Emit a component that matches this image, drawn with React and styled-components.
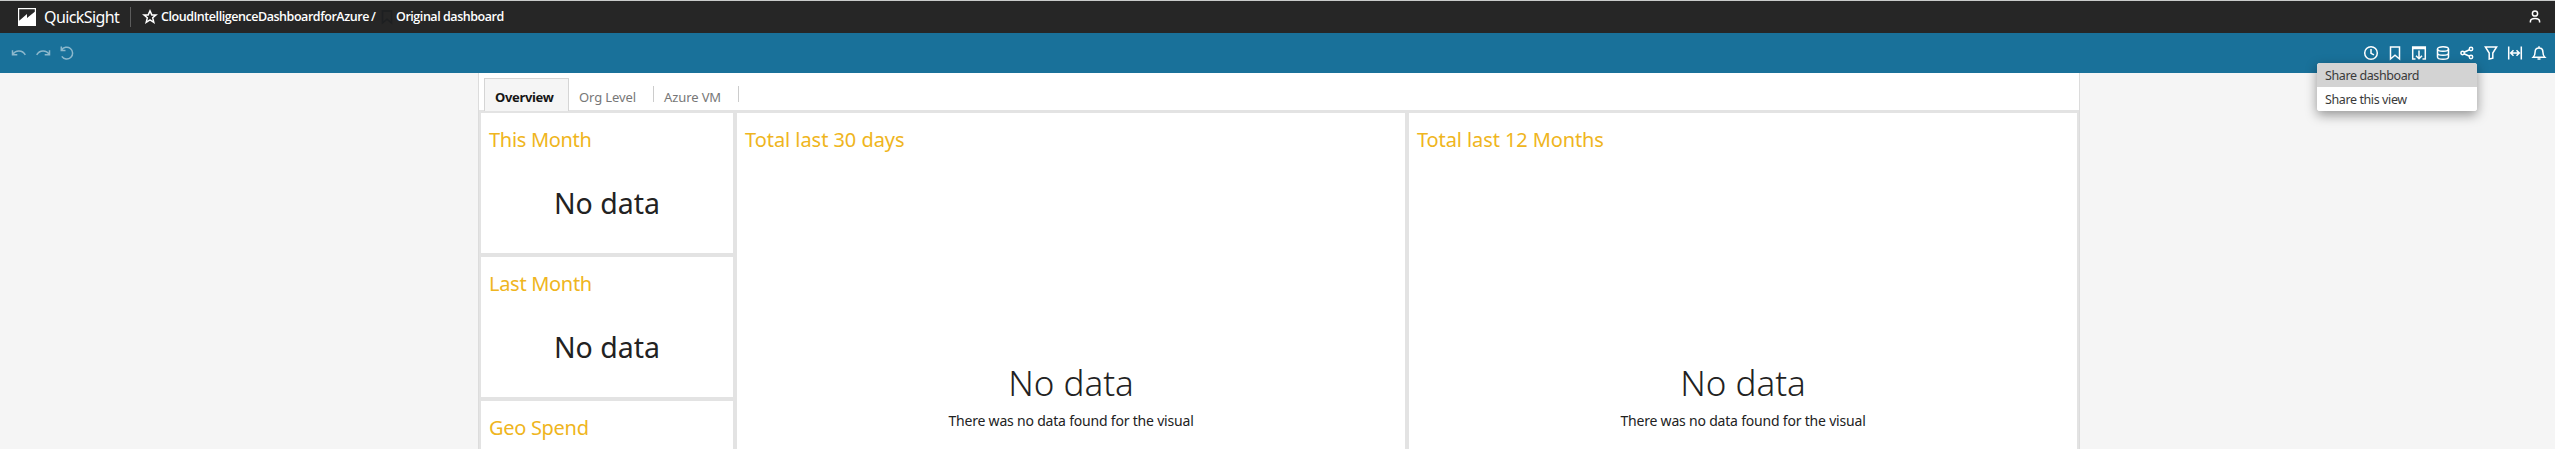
import React from "react";
import styled, { createGlobalStyle } from "styled-components";

const GlobalStyle = createGlobalStyle`
  * { box-sizing: border-box; }
  body { margin: 0; font-family: "Noto Sans", "Open Sans", sans-serif; background: #f5f5f5; }
`;

const Page = styled.div`
  display: flex;
  flex-direction: column;
  height: 449px;
  overflow: hidden;
  color: #222;
`;

const Header = styled.header`
  display: flex;
  align-items: center;
  flex: none;
  height: 33px;
  padding: 0 12px 0 18px;
  background: #262626;
  border-top: 1px solid #c9cbca;
  color: #fff;
`;

const Brand = styled.span`
  width: 76px;
  margin-left: 8px;
  font-size: 16px;
  line-height: 20px;
  letter-spacing: -0.6px;
  white-space: nowrap;
`;

const Divider = styled.span`
  width: 1px;
  height: 20px;
  margin: 0 11px 0 10px;
  background: #5c5c5c;
`;

const Crumb = styled.span`
  width: ${(p) => p.$width}px;
  margin-left: ${(p) => p.$gap}px;
  font-family: "Open Sans", sans-serif;
  font-size: 12.5px;
  font-weight: 600;
  line-height: 18px;
  letter-spacing: -0.45px;
  white-space: nowrap;
`;

const Toolbar = styled.nav`
  display: flex;
  align-items: center;
  justify-content: space-between;
  position: relative;
  flex: none;
  height: 40px;
  padding: 0 8px 0 11px;
  background: #19719a;
  color: #fff;
`;

const IconGroup = styled.div`
  display: flex;
  gap: 8px;
  opacity: ${(p) => (p.$muted ? 0.5 : 1)};
`;

const Icon = styled.svg`
  display: block;
  flex: none;
  width: 16px;
  height: 16px;
  fill: none;
  stroke: currentColor;
  stroke-width: 1.5;
  overflow: visible;
`;

const Logo = styled(Icon)`
  width: 18px;
  height: 18px;
`;

const CrumbIcon = styled(Icon)`
  margin-left: 2px;
  color: #1d1f21;
`;

const UserIcon = styled(Icon)`
  margin-left: auto;
`;

const Menu = styled.div`
  position: absolute;
  z-index: 2;
  top: 30px;
  right: 78px;
  width: 160px;
  overflow: hidden;
  background: #fff;
  border-radius: 3px;
  box-shadow: 0 4px 12px rgba(0, 0, 0, 0.4);
`;

const MenuItem = styled.div`
  height: 24px;
  padding-left: 8px;
  background: ${(p) => (p.$active ? "#d3d3d3" : "#fff")};
  color: #3a3a3a;
  font-size: 12.5px;
  line-height: 26px;
  letter-spacing: -0.4px;
`;

const Sheet = styled.main`
  display: flex;
  flex-direction: column;
  flex: 1;
  width: 1602px;
  margin-left: 478px;
  background: #fff;
  border: solid #dcdcdc;
  border-width: 0 1px;
`;

const Tabs = styled.div`
  display: flex;
  flex: none;
  height: 37px;
  padding: 5px 0 0 5px;
`;

const Tab = styled.div`
  display: flex;
  width: 85px;
  padding-left: 10px;
  color: ${(p) => (p.$active ? "#161616" : "#777")};
  font-size: 13px;
  line-height: 38px;
  letter-spacing: ${(p) => (p.$active ? -0.35 : -0.1)}px;
  font-weight: ${(p) => (p.$active ? 700 : 400)};
  white-space: nowrap;
  ${(p) =>
    p.$active &&
    "height: 33px; background: #f5f5f5; border: solid #d5d5d5; border-width: 1px 1px 0; line-height: 36px; z-index: 1;"}
`;

const TabRule = styled.span`
  width: 1px;
  height: 16px;
  margin: 8px 0 0 auto;
  background: #ccc;
`;

const Board = styled.div`
  display: grid;
  grid-template-columns: 252px 668px 668px;
  gap: 4px;
  flex: 1;
  padding: 3px 2px 0;
  background: #e3e3e3;
`;

const Stack = styled.div`
  display: grid;
  grid-template-rows: 140px 140px 140px;
  gap: 4px;
  height: 336px;
  overflow: hidden;
`;

const Card = styled.section`
  display: flex;
  flex-direction: column;
  height: ${(p) => (p.$tall ? 336 : 140)}px;
  padding: 13px 8px 0;
  background: #fff;
`;

const Title = styled.h2`
  margin: 0;
  color: #efb520;
  font-size: 20px;
  font-weight: 400;
  line-height: 27px;
  letter-spacing: ${(p) => p.$spacing}px;
  white-space: nowrap;
`;

const Value = styled.div`
  margin-top: 30px;
  font-size: 28.5px;
  line-height: 40px;
  text-align: center;
`;

const Empty = styled.div`
  display: flex;
  flex-direction: column;
  align-items: center;
  margin-top: 206px;
`;

const EmptyHeading = styled.div`
  font-size: 35px;
  font-weight: 300;
  line-height: 48px;
`;

const EmptyText = styled.div`
  margin-top: 4px;
  font-size: 14px;
  line-height: 20px;
  letter-spacing: -0.2px;
`;

const tools = [
  <><circle cx="8" cy="8" r="6.3" /><path d="M8 4v4.3l3 1.5" /></>,
  <path d="M3.5 2h9v12L8 10.2 3.5 14z" />,
  <><path d="M4.5 14H1.7V2h12.6v12h-2.8M1.7 3.5h12.6" /><path d="M8 5.5v8M5 10.7l3 3 3-3" /></>,
  <><ellipse cx="8" cy="4" rx="5.5" ry="2.3" /><path d="M2.5 4v8c0 3 11 3 11 0V4M2.5 8c0 3 11 3 11 0" /></>,
  <><circle cx="3.6" cy="8" r="1.7" /><circle cx="12" cy="4" r="1.7" /><circle cx="12" cy="12" r="1.7" /><path d="M5.1 7.3l5.4-2.5M5.1 8.7l5.4 2.5" /></>,
  <path d="M2.4 2h11.2L9.8 8v5.2L6.2 14V8z" />,
  <><path d="M1.7 1.5v13M14.3 1.5v13M3.8 8h8.4M6.5 5.2L3.7 8l2.8 2.8M9.5 5.2L12.3 8l-2.8 2.8" /></>,
  <><path d="M2.2 12.2h11.6c-1.5-1.5-1.9-2.5-1.9-5.2 0-2.4-1.4-4-3.9-4s-3.9 1.6-3.9 4c0 2.7-.4 3.7-1.9 5.2zM8 1.3V3M6.5 14h3" /></>,
];

const history = [
  <path d="M1.5 5.2v4.6h4.8M1.8 9.4C4.5 4.7 11.5 4.7 14.3 9.8" />,
  <path d="M14.5 5.2v4.6H9.7M14.2 9.4C11.5 4.7 4.5 4.7 1.7 9.8" />,
  <path d="M2.3 1.5v4h4.2M2.6 5.2a5.9 5.9 0 1 1 .2 6.2" />,
];

const months = [
  ["This Month", "No data"],
  ["Last Month", "No data"],
  ["Geo Spend", ""],
];

const totals = [
  ["Total last 30 days", -0.05],
  ["Total last 12 Months", -0.1],
];

export default function App() {
  return (
    <Page>
      <GlobalStyle />
      <Header>
        <Logo viewBox="0 0 18 18">
          <path d="M0 0h18v18H0z" fill="#fff" stroke="none" />
          <path d="M1.2 1.2h15.6v2.5L9 10V6L1.2 12.8z" fill="#262626" stroke="none" />
        </Logo>
        <Brand>QuickSight</Brand>
        <Divider />
        <Icon viewBox="0 0 16 16">
          <path d="M8 1.9l1.8 4h4.2l-3.3 2.9 1.1 4.6L8 10.9l-3.8 2.5 1.1-4.6L2 5.9h4.2z" />
        </Icon>
        <Crumb $width={206} $gap={3}>CloudIntelligenceDashboardforAzure</Crumb>
        <Crumb $width={6} $gap={4}>/</Crumb>
        <CrumbIcon viewBox="0 0 16 16">{tools[1]}</CrumbIcon>
        <Crumb $width={110} $gap={1}>Original dashboard</Crumb>
        <UserIcon viewBox="0 0 16 16">
          <circle cx="8" cy="4.5" r="2.6" />
          <path d="M3.4 13.5v-1c0-4 9.2-4 9.2 0v1" />
        </UserIcon>
      </Header>
      <Toolbar>
        <IconGroup $muted>
          {history.map((shape, i) => <Icon key={i} viewBox="0 0 16 16">{shape}</Icon>)}
        </IconGroup>
        <IconGroup>
          {tools.map((shape, i) => <Icon key={i} viewBox="0 0 16 16">{shape}</Icon>)}
        </IconGroup>
        <Menu>
          <MenuItem $active>Share dashboard</MenuItem>
          <MenuItem>Share this view</MenuItem>
        </Menu>
      </Toolbar>
      <Sheet>
        <Tabs>
          <Tab $active>Overview</Tab>
          <Tab>Org Level<TabRule /></Tab>
          <Tab>Azure VM<TabRule /></Tab>
        </Tabs>
        <Board>
          <Stack>
            {months.map(([title, value]) => (
              <Card key={title}>
                <Title $spacing={-0.3}>{title}</Title>
                {value && <Value>{value}</Value>}
              </Card>
            ))}
          </Stack>
          {totals.map(([title, spacing]) => (
            <Card key={title} $tall>
              <Title $spacing={spacing}>{title}</Title>
              <Empty>
                <EmptyHeading>No data</EmptyHeading>
                <EmptyText>There was no data found for the visual</EmptyText>
              </Empty>
            </Card>
          ))}
        </Board>
      </Sheet>
    </Page>
  );
}
